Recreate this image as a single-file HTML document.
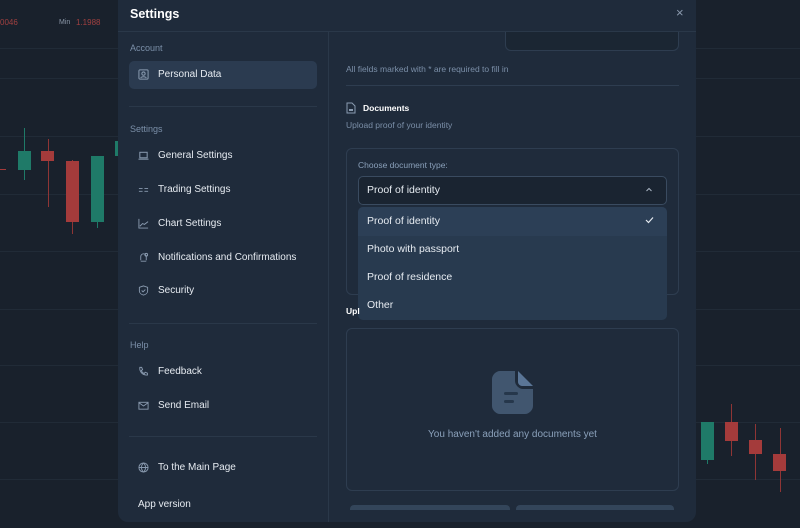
<!DOCTYPE html>
<html><head><meta charset="utf-8"><style>
*{box-sizing:border-box;margin:0;padding:0}
body{width:800px;height:528px;overflow:hidden;background:#19212c;font-family:"Liberation Sans",sans-serif;position:relative}
.a{position:absolute}
.gl{position:absolute;left:0;width:800px;height:1px;background:#212b37}
.modal{left:118px;top:0;width:578px;height:522px;background:#1f2b3b;border-radius:0 0 10px 10px}
.hdr{left:0;top:0;width:578px;height:32px;border-bottom:1px solid #2a3849}
.side{left:0;top:32px;width:211px;height:490px;border-right:1px solid #2a3849}
.sec{color:#7b8fa8;font-size:9px}
.it{color:#e6ebf1;font-size:10px;left:40px;margin-top:1px}
.ic{left:20px;width:11px;height:11px}
.t{color:#e6ebf1;font-size:10.5px}
</style></head><body>
<div class="gl" style="top:48px"></div><div class="gl" style="top:78px"></div><div class="gl" style="top:136px"></div><div class="gl" style="top:194px"></div><div class="gl" style="top:251px"></div><div class="gl" style="top:309px"></div><div class="gl" style="top:365px"></div><div class="gl" style="top:422px"></div><div class="gl" style="top:479px"></div>
<div class="a" style="left:0;top:18px;color:#a14040;font-size:8px">0046</div>
<div class="a" style="left:59px;top:19px;color:#8a96a6;font-size:7px">Min</div>
<div class="a" style="left:76px;top:18px;color:#a14040;font-size:8px">1.1988</div>
<div class="a" style="left:0;top:169px;width:6px;height:1px;background:#a43b3b"></div>
<div class="a" style="left:24px;top:128px;width:1px;height:52px;background:#1f7a68"></div>
<div class="a" style="left:18px;top:151px;width:13px;height:19px;background:#1f7a68"></div>
<div class="a" style="left:48px;top:139px;width:1px;height:68px;background:#8f3535"></div>
<div class="a" style="left:41px;top:151px;width:13px;height:10px;background:#a43b3b"></div>
<div class="a" style="left:72px;top:160px;width:1px;height:74px;background:#8f3535"></div>
<div class="a" style="left:66px;top:161px;width:13px;height:61px;background:#a43b3b"></div>
<div class="a" style="left:97px;top:156px;width:1px;height:72px;background:#1f7a68"></div>
<div class="a" style="left:91px;top:156px;width:13px;height:66px;background:#1f7a68"></div>
<div class="a" style="left:115px;top:141px;width:4px;height:15px;background:#1f7a68"></div>
<div class="a" style="left:707px;top:422px;width:1px;height:42px;background:#1f7a68"></div>
<div class="a" style="left:701px;top:422px;width:13px;height:38px;background:#1f7a68"></div>
<div class="a" style="left:731px;top:404px;width:1px;height:52px;background:#8f3535"></div>
<div class="a" style="left:725px;top:422px;width:13px;height:19px;background:#a43b3b"></div>
<div class="a" style="left:755px;top:424px;width:1px;height:56px;background:#8f3535"></div>
<div class="a" style="left:749px;top:440px;width:13px;height:14px;background:#a43b3b"></div>
<div class="a" style="left:780px;top:428px;width:1px;height:64px;background:#8f3535"></div>
<div class="a" style="left:773px;top:454px;width:13px;height:17px;background:#a43b3b"></div>

<div class="a modal">
 <div class="a hdr"><div class="a" style="left:12px;top:7px;color:#fff;font-size:12.5px;font-weight:bold">Settings</div>
  <div class="a" style="left:558px;top:5px;color:#8a99ad;font-size:13px">×</div></div>
 <div class="a side">
  <div class="a sec" style="left:12px;top:11px">Account</div>
  <div class="a" style="left:11px;top:29px;width:188px;height:28px;background:#2b3b50;border-radius:5px"></div>
  <svg class="a ic" style="top:37px" viewBox="0 0 12 12" fill="none" stroke="#8a9bb0" stroke-width="1.1"><rect x="1" y="1" width="10" height="10" rx="1"/><circle cx="6" cy="5" r="1.8"/><path d="M3 10c.5-2 5.5-2 6 0"/></svg>
  <div class="a it" style="top:36px">Personal Data</div>
  <div class="a" style="left:11px;top:74px;width:188px;height:1px;background:#2a3849"></div>
  <div class="a sec" style="left:12px;top:92px">Settings</div>
  <svg class="a ic" style="top:118px" viewBox="0 0 12 12" fill="none" stroke="#8a9bb0" stroke-width="1.1"><rect x="2" y="2.5" width="8" height="6"/><path d="M.5 10h11"/></svg>
  <div class="a it" style="top:117px">General Settings</div>
  <svg class="a ic" style="top:152px" viewBox="0 0 12 12" fill="none" stroke="#8a9bb0" stroke-width="1"><path d="M1 5h4M1 8h4M7 5h4M7 8h4"/></svg>
  <div class="a it" style="top:151px">Trading Settings</div>
  <svg class="a ic" style="top:186px" viewBox="0 0 12 12" fill="none" stroke="#8a9bb0" stroke-width="1"><path d="M1 1v10h10M2 9l3-3 2 1 4-3"/></svg>
  <div class="a it" style="top:185px">Chart Settings</div>
  <svg class="a ic" style="top:220px" viewBox="0 0 12 12" fill="none" stroke="#8a9bb0" stroke-width="1"><path d="M3 10h6M3 9V5a3 3 0 016 0v4"/><circle cx="9" cy="3" r="1.5"/></svg>
  <div class="a it" style="top:219px">Notifications and Confirmations</div>
  <svg class="a ic" style="top:253px" viewBox="0 0 12 12" fill="none" stroke="#8a9bb0" stroke-width="1"><path d="M6 1l4.5 1.5v4C10.5 9 8 10.5 6 11 4 10.5 1.5 9 1.5 6.5v-4z"/><path d="M4 6l1.5 1.5L8 5"/></svg>
  <div class="a it" style="top:252px">Security</div>
  <div class="a" style="left:11px;top:291px;width:188px;height:1px;background:#2a3849"></div>
  <div class="a sec" style="left:12px;top:308px">Help</div>
  <svg class="a ic" style="top:334px" viewBox="0 0 12 12" fill="none" stroke="#8a9bb0" stroke-width="1"><path d="M2 1.5l2 0 1 2.5-1.5 1c.7 1.5 1.8 2.6 3.3 3.3l1-1.5 2.5 1v2c-5 .5-9-3.5-8.3-8.3z"/></svg>
  <div class="a it" style="top:333px">Feedback</div>
  <svg class="a ic" style="top:368px" viewBox="0 0 12 12" fill="none" stroke="#8a9bb0" stroke-width="1"><rect x="1" y="2.5" width="10" height="7.5"/><path d="M1 3l5 3.5L11 3"/></svg>
  <div class="a it" style="top:367px">Send Email</div>
  <div class="a" style="left:11px;top:404px;width:188px;height:1px;background:#2a3849"></div>
  <svg class="a ic" style="top:430px" viewBox="0 0 12 12" fill="none" stroke="#8a9bb0" stroke-width="1"><circle cx="6" cy="6" r="5"/><path d="M1 6h10M6 1c-3 3-3 7 0 10M6 1c3 3 3 7 0 10"/></svg>
  <div class="a it" style="top:429px">To the Main Page</div>
  <div class="a t" style="left:20px;top:467px;font-size:10px">App version</div>
 </div>
 <div class="a" style="left:387px;top:32px;width:174px;height:19px;border:1px solid #2e3d50;border-top:none;border-radius:0 0 6px 6px;background:#1b2633"></div>
 <div class="a" style="left:228px;top:64px;color:#7b8fa8;font-size:8.5px">All fields marked with * are required to fill in</div>
 <div class="a" style="left:228px;top:85px;width:333px;height:1px;background:#2e3d50"></div>
 <svg class="a" style="left:228px;top:102px" width="10" height="12" viewBox="0 0 10 12" fill="none" stroke="#8a9bb0" stroke-width="1"><path d="M1 1h5l3 3v7H1z"/><rect x="3" y="7" width="4" height="2" fill="#8a9bb0" stroke="none"/></svg>
 <div class="a" style="left:245px;top:103px;color:#fff;font-size:8.5px;font-weight:bold">Documents</div>
 <div class="a" style="left:228px;top:120px;color:#7b8fa8;font-size:8.5px">Upload proof of your identity</div>
 <div class="a" style="left:228px;top:148px;width:333px;height:147px;border:1px solid #2e3d50;border-radius:6px"></div>
 <div class="a" style="left:240px;top:160px;color:#8aa0ba;font-size:8.5px">Choose document type:</div>
 <div class="a" style="left:240px;top:176px;width:309px;height:29px;border:1px solid #3a4b60;border-radius:5px;background:#1a2431"></div>
 <div class="a t" style="left:249px;top:184px">Proof of identity</div>
 <svg class="a" style="left:527px;top:187px" width="8" height="6" viewBox="0 0 8 6" fill="none" stroke="#aab5c3" stroke-width="1"><path d="M1.5 4L4 1.5 6.5 4"/></svg>
 <div class="a" style="left:240px;top:207px;width:309px;height:113px;background:#283a4f;border-radius:5px;overflow:hidden">
  <div style="height:29px;background:#2c3f56"></div>
 </div>
 <div class="a t" style="left:249px;top:215px">Proof of identity</div>
 <svg class="a" style="left:527px;top:216px" width="9" height="8" viewBox="0 0 9 8" fill="none" stroke="#e6ebf1" stroke-width="1.2"><path d="M1 4l2.5 2.5L8 1.5"/></svg>
 <div class="a t" style="left:249px;top:243px">Photo with passport</div>
 <div class="a t" style="left:249px;top:271px">Proof of residence</div>
 <div class="a t" style="left:249px;top:299px">Other</div>
 <div class="a" style="left:228px;top:306px;color:#fff;font-size:8.5px;font-weight:bold">Upl</div>
 <div class="a" style="left:228px;top:328px;width:333px;height:163px;border:1px solid #2e3d50;border-radius:6px"></div>
 <svg class="a" style="left:374px;top:371px" width="41" height="43" viewBox="0 0 41 43"><path d="M8 0h15l0 10c0 4 4 8 8 8h10v17c0 4-4 8-8 8H8c-4 0-8-4-8-8V8c0-4 4-8 8-8z" fill="#41566f"/><path d="M26 0l15 15H30c-2 0-4-2-4-4z" fill="#5a7596"/><rect x="12" y="21" width="14" height="3" rx="1.5" fill="#26374b"/><rect x="12" y="29" width="10" height="3" rx="1.5" fill="#26374b"/></svg>
 <div class="a" style="left:228px;top:429px;width:333px;text-align:center;color:#8aa0ba;font-size:10px">You haven't added any documents yet</div>
 <div class="a" style="left:232px;top:505px;width:160px;height:5px;background:#33455a;border-radius:4px 4px 0 0"></div>
 <div class="a" style="left:398px;top:505px;width:158px;height:5px;background:#33455a;border-radius:4px 4px 0 0"></div>
</div>
</body></html>
